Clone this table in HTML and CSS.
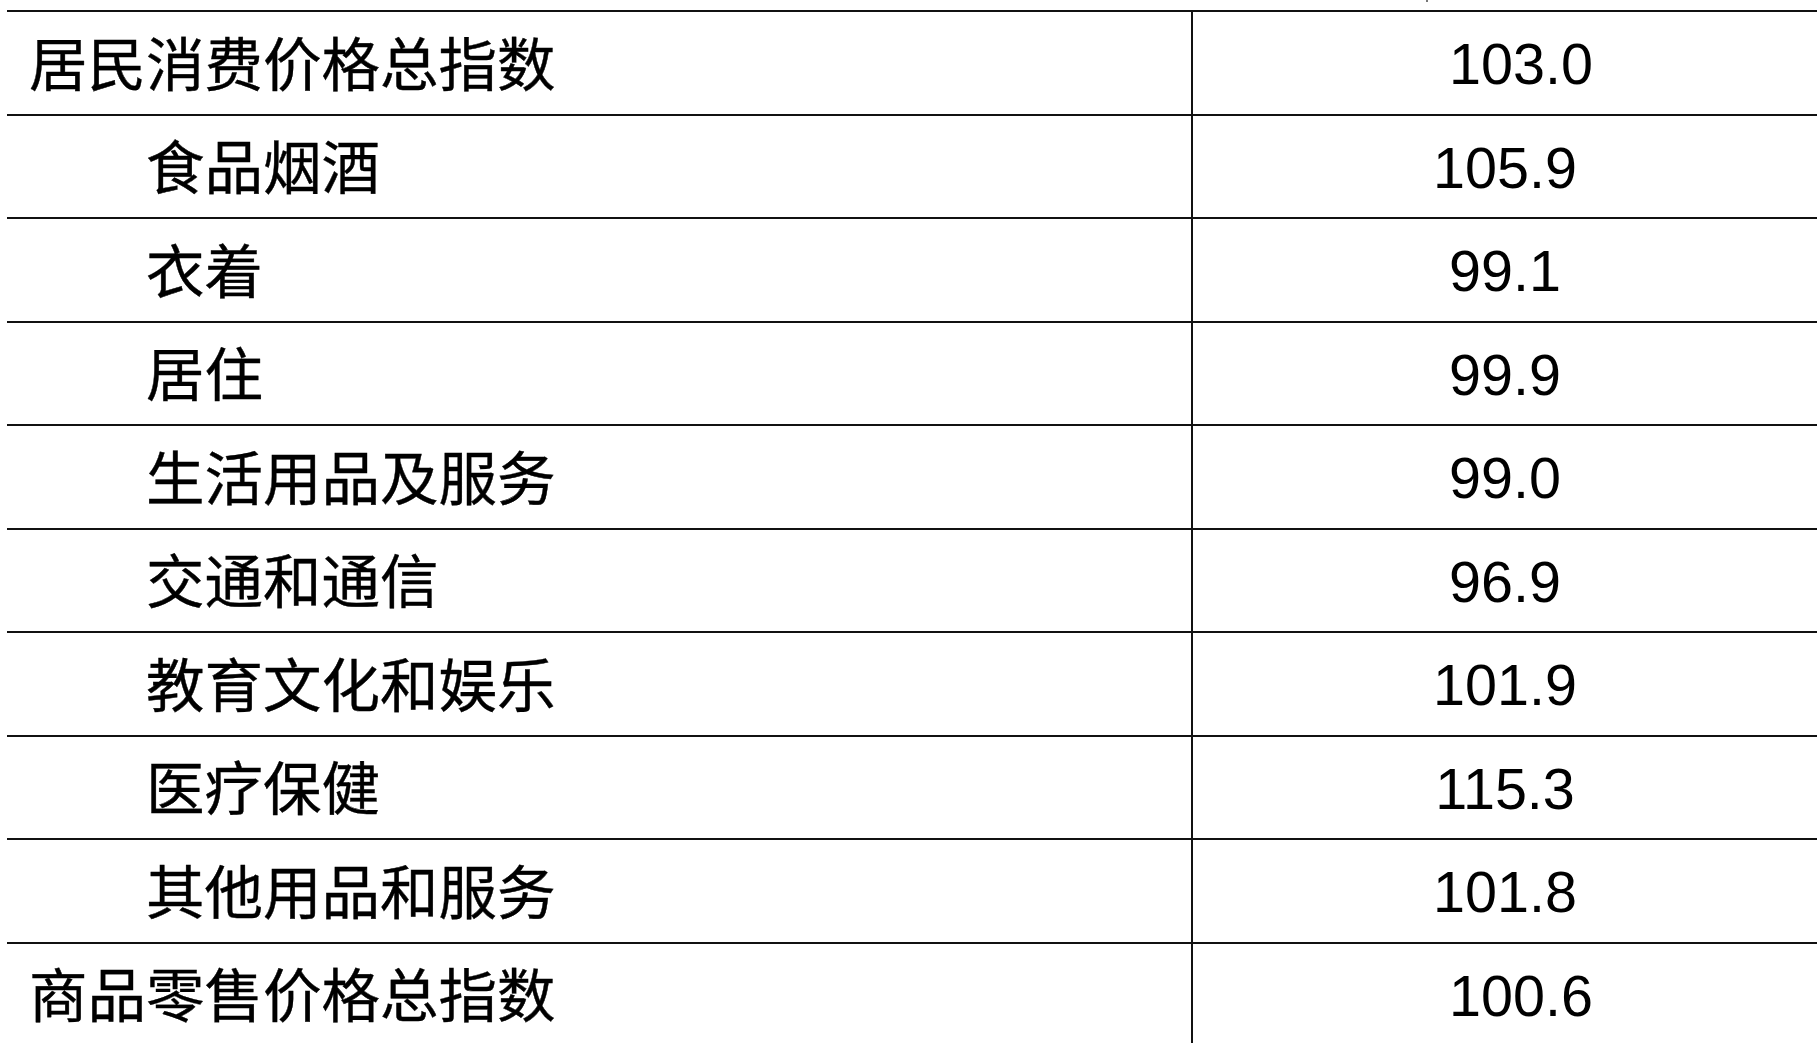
FILE: index.html
```html
<!DOCTYPE html>
<html lang="zh-CN">
<head>
<meta charset="utf-8">
<title>价格指数</title>
<link rel="stylesheet" href="styles.css">
</head>
<body>
<div class="sheet">
  <span class="clip-mark"></span>
  <div class="table">
    <div class="row total"><div class="name">居民消费价格总指数</div><div class="val">103.0</div></div>
    <div class="row sub"><div class="name">食品烟酒</div><div class="val">105.9</div></div>
    <div class="row sub"><div class="name">衣着</div><div class="val">99.1</div></div>
    <div class="row sub"><div class="name">居住</div><div class="val">99.9</div></div>
    <div class="row sub"><div class="name">生活用品及服务</div><div class="val">99.0</div></div>
    <div class="row sub"><div class="name">交通和通信</div><div class="val">96.9</div></div>
    <div class="row sub"><div class="name">教育文化和娱乐</div><div class="val">101.9</div></div>
    <div class="row sub"><div class="name">医疗保健</div><div class="val">115.3</div></div>
    <div class="row sub"><div class="name">其他用品和服务</div><div class="val">101.8</div></div>
    <div class="row total"><div class="name">商品零售价格总指数</div><div class="val">100.6</div></div>
  </div>
</div>
</body>
</html>
```
FILE: styles.css
```css
html, body {
  margin: 0;
  padding: 0;
  background: #fff;
  overflow: hidden;
}

body {
  width: 1817px;
  height: 1043px;
}

.sheet {
  position: relative;
  padding-top: 10px;
  padding-left: 7px;
}

.clip-mark {
  position: absolute;
  left: 1426px;
  top: 0;
  width: 2px;
  height: 2px;
  background: #777;
}

.table {
  width: 1810px;
  display: flex;
  flex-direction: column;
  color: #000;
}

.row {
  box-sizing: border-box;
  height: 103.5px;
  border-top: 2px solid #111;
  display: grid;
  grid-template-columns: 1184px 1fr;
}

.name {
  display: flex;
  align-items: center;
  padding-bottom: 4px;
  font-family: "Noto Sans CJK SC", "Liberation Sans", sans-serif;
  font-size: 58.5px;
  line-height: 1;
  white-space: nowrap;
  -webkit-text-stroke: 0.4px #000;
}

.total .name {
  padding-left: 22px;
}

.sub .name {
  padding-left: 139px;
}

.val {
  border-left: 2px solid #111;
  display: flex;
  align-items: center;
  justify-content: center;
  padding-top: 4px;
  font-family: "Liberation Sans", Arial, sans-serif;
  font-size: 57.5px;
  line-height: 1;
}

.total .val {
  padding-left: 32px;
}
```
